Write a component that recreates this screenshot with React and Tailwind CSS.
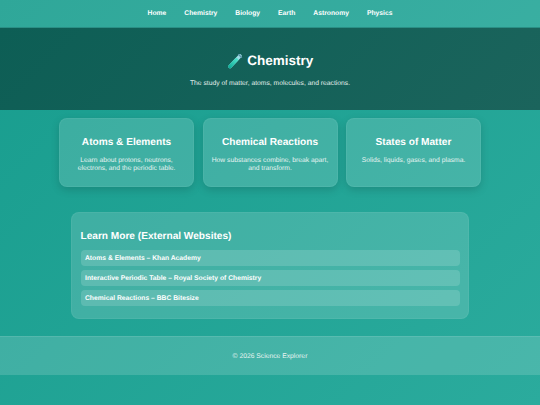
import React from 'react';

const navLinks = ['Home', 'Chemistry', 'Biology', 'Earth', 'Astronomy', 'Physics'];

const topics = [
  { title: 'Atoms & Elements', text: 'Learn about protons, neutrons, electrons, and the periodic table.' },
  { title: 'Chemical Reactions', text: 'How substances combine, break apart, and transform.' },
  { title: 'States of Matter', text: 'Solids, liquids, gases, and plasma.' },
];

const externalLinks = [
  'Atoms & Elements – Khan Academy',
  'Interactive Periodic Table – Royal Society of Chemistry',
  'Chemical Reactions – BBC Bitesize',
];

function TestTube() {
  return (
    <svg width="16" height="16" viewBox="0 0 16 16" className="shrink-0">
      <defs>
        <linearGradient id="liquid" x1="2" y1="14" x2="10" y2="6" gradientUnits="userSpaceOnUse">
          <stop offset="0" stopColor="#0fae98" />
          <stop offset="1" stopColor="#4fe0c8" />
        </linearGradient>
      </defs>
      <path d="M3 13.5 L13 3" stroke="#9fdde6" strokeWidth="3.6" strokeLinecap="round" />
      <path d="M3 13.5 L9.4 6.8" stroke="url(#liquid)" strokeWidth="3.6" strokeLinecap="round" />
      <path d="M11.6 1.6 L14.6 4.4" stroke="#5a93a8" strokeWidth="1.3" strokeLinecap="round" />
    </svg>
  );
}

export default function App() {
  return (
    <div className="min-h-screen bg-[linear-gradient(135deg,#189d8e,#2bab9d)] text-white font-['Liberation_Sans',Arial,sans-serif] [text-rendering:geometricPrecision]">
      {/* Nav */}
      <nav className="h-[28px] pt-[2px] flex items-center justify-center gap-[18px] bg-white/10 border-b border-[#2a8f85]">
        {navLinks.map((link) => (
          <a key={link} className="text-[6.75px] font-bold">{link}</a>
        ))}
      </nav>

      {/* Hero */}
      <header className="h-[82px] flex flex-col items-center bg-[linear-gradient(135deg,#0d5e55,#1b645c)] pt-[24px]">
        <h1 className="flex items-center gap-[4.5px] text-[13.5px] leading-[18px] font-bold">
          <TestTube />
          Chemistry
        </h1>
        <p className="mt-[9px] text-[6.75px] leading-[9px] text-[#e3efed]">
          The study of matter, atoms, molecules, and reactions.
        </p>
      </header>

      {/* Topic cards */}
      <section className="mt-[8px] flex justify-center gap-[8.5px]">
        {topics.map((topic) => (
          <div
            key={topic.title}
            className="w-[135px] h-[69px] rounded-[8px] bg-white/15 border border-white/5 shadow-[0_3px_8px_rgba(0,0,0,0.15)] px-[8px] pt-[17px] text-center"
          >
            <h2 className="text-[10.125px] leading-[13px] font-bold">{topic.title}</h2>
            <p className="mt-[7.5px] text-[6.75px] leading-[8px] text-[#e6f3f1]">{topic.text}</p>
          </div>
        ))}
      </section>

      {/* External links */}
      <section className="mt-[25px] mx-auto w-[398px] h-[107px] rounded-[8px] bg-white/15 border border-white/5 px-[8.5px] pt-[17px]">
        <h2 className="text-[10.125px] leading-[13px] font-bold">Learn More (External Websites)</h2>
        <ul className="mt-[7px] flex flex-col gap-[4px]">
          {externalLinks.map((link) => (
            <li key={link} className="h-[16px] pt-[1.5px] flex items-center rounded-[4px] bg-white/15 px-[4.5px] text-[6.75px] font-bold">
              {link}
            </li>
          ))}
        </ul>
      </section>

      {/* Footer */}
      <footer className="mt-[17px] h-[39px] pt-[3px] flex items-center justify-center bg-white/15 border-t border-white/10 text-[6.75px] text-[#e6f3f1]">
        © 2026 Science Explorer
      </footer>
    </div>
  );
}
